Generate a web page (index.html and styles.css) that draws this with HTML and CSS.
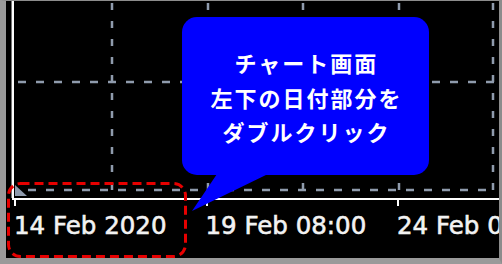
FILE: index.html
```html
<!doctype html>
<html lang="ja">
<head>
<title>チャート画面</title>
<meta http-equiv="Content-Type" content="text/html; charset=utf-8">
<link rel="stylesheet" href="styles.css">
</head>
<body>

<div class="shot">

  <div class="chart">
    <svg class="plot" width="493" height="199" viewBox="0 0 493 199">
      <!-- grid -->
      <g class="grid">
        <line x1="106" y1="2" x2="106" y2="190"></line>
        <line x1="202" y1="2" x2="202" y2="190"></line>
        <line x1="297" y1="2" x2="297" y2="190"></line>
        <line x1="393" y1="2" x2="393" y2="190"></line>
        <line x1="487" y1="2" x2="487" y2="190"></line>
        <line x1="12" y1="81" x2="488" y2="81"></line>
        <line x1="22" y1="189" x2="488" y2="189"></line>
      </g>
      <polygon class="shift" points="9,184 9,195 21,195"></polygon>
      <!-- axes -->
      <rect class="axis-edge" x="5" y="0" width="1" height="197"></rect>
      <rect class="axis" x="6" y="0" width="2" height="199"></rect>
      <rect class="axis" x="6" y="197" width="487" height="2"></rect>
    </svg>

    <div class="axis-labels">
      <div class="tick-label"><span>14 Feb 2020</span></div>
      <div class="tick-label"><span>19 Feb 08:00</span></div>
      <div class="tick-label"><span>24 Feb 00:00</span></div>
    </div>
  </div>

  <div class="bubble">
    <p>チャート画面<br>左下の日付部分を<br>ダブルクリック</p>
  </div>

  <svg class="focus-ring" width="180" height="76" viewBox="0 0 180 76">
    <rect x="1.5" y="1.5" width="177" height="73" rx="12" ry="12"></rect>
  </svg>

</div>

</body>
</html>
```

FILE: styles.css
```css
BODY {
  margin: 0;
  padding: 0;
  background: #fff;
}
.shot {
  position: relative;
  width: 502px;
  height: 264px;
  box-sizing: border-box;
  border-style: solid;
  border-color: #8c8c8c #8c8c8c #9a9a9a #9a9a9a;
  border-width: 1px 3px 6px 6px;
  background: #000;
  overflow: hidden;
}
.chart {
  display: flex;
  flex-direction: column;
}
.plot {
  display: block;
}
.grid LINE {
  stroke: #8f9bad;
  stroke-width: 2.5;
  stroke-dasharray: 7 11;
}
.grid LINE:nth-child(n+6) {
  stroke-dasharray: 8 10;
}
.shift {
  fill: #8f9bad;
}
.axis {
  fill: #fff;
}
.axis-edge {
  fill: #777;
}
.axis-labels {
  display: flex;
  height: 58px;
  padding-left: 8px;
  overflow: hidden;
}
.tick-label {
  flex: 0 0 191.5px;
  display: flex;
  flex-direction: column;
}
.tick-label::before {
  content: '';
  width: 2px;
  height: 6px;
  background: #fff;
}
.tick-label SPAN {
  margin-top: 6px;
  font: 24.5px/28px "DejaVu Sans", Verdana, sans-serif;
  color: #f2f2f2;
  -webkit-text-stroke: 0.6px #f2f2f2;
  white-space: nowrap;
}
.bubble {
  position: absolute;
  left: 176px;
  top: 16px;
  width: 247px;
  height: 158px;
  border-radius: 15px;
  background: #00f;
  display: flex;
  align-items: center;
  justify-content: center;
}
.bubble::after {
  content: '';
  position: absolute;
  left: 10px;
  top: 150px;
  width: 76px;
  height: 44px;
  background: #00f;
  clip-path: polygon(25px 0, 76px 0, 76px 7px, 0 44px, 25px 7px);
}
.bubble P {
  margin: 2px 0 0 0;
  padding-left: 2px;
  font: bold 22px/34.5px "Noto Sans CJK JP", sans-serif;
  letter-spacing: 2px;
  text-align: center;
  color: #fff;
}
.focus-ring {
  position: absolute;
  left: 1px;
  top: 181px;
}
.focus-ring RECT {
  fill: none;
  stroke: #e60000;
  stroke-width: 3;
  stroke-dasharray: 9 5;
}
```
